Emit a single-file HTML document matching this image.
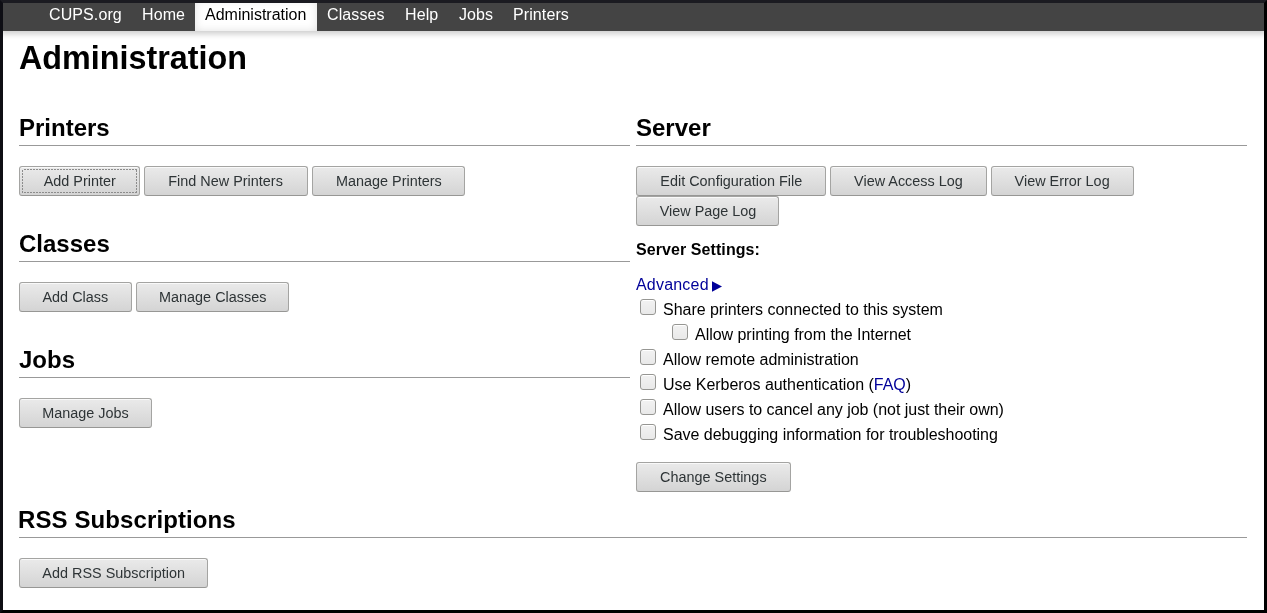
<!DOCTYPE html>
<html><head><meta charset="utf-8">
<style>
*{box-sizing:border-box}
html,body{margin:0;padding:0}
body{width:1267px;height:613px;overflow:hidden;position:relative;background:#fff;color:#000;font-family:"Liberation Sans",sans-serif;font-size:16px}
.fr{position:absolute;z-index:100}
.nav{position:absolute;left:0;top:0;width:1267px;height:31px;background:#444;box-shadow:0 3px 6px rgba(0,0,0,.2);z-index:50}
.nav a{position:absolute;top:0;height:31px;line-height:18px;padding:6px 10px 0;color:#fff;text-decoration:none;white-space:nowrap;letter-spacing:0.1px}
.nav a.active{letter-spacing:0;background:#fff;color:#000;box-shadow:inset 0 0 8px rgba(0,0,0,.12)}
.abs{position:absolute;white-space:nowrap}
h1{position:absolute;margin:0;font-size:32.3px;font-weight:bold;line-height:37px}
h2{position:absolute;margin:0;font-size:24px;font-weight:bold;line-height:28px}
.rule{position:absolute;height:1px;background:#999}
.btn{position:absolute;height:30px;border:1px solid #a4a4a2;border-bottom-color:#979795;border-radius:3px;background:linear-gradient(#eaeaea,#d4d4d4);box-shadow:inset 0 1px 0 rgba(255,255,255,.7);font-size:15.5px;color:#2e3436;text-align:center;line-height:28px;white-space:nowrap}
.btn.focus::after{content:"";position:absolute;left:2px;top:2px;right:2px;bottom:2px;background:repeating-linear-gradient(90deg,#8c8c8c 0 2px,transparent 2px 3px) 2px 0/100% 1px no-repeat,repeating-linear-gradient(90deg,#8c8c8c 0 2px,transparent 2px 3px) 2px 100%/100% 1px no-repeat,repeating-linear-gradient(180deg,#8c8c8c 0 2px,transparent 2px 3px) 0 1px/1px 100% no-repeat,repeating-linear-gradient(180deg,#8c8c8c 0 2px,transparent 2px 3px) 100% 1px/1px 100% no-repeat}
.cb{position:absolute;width:16px;height:16px;border:1px solid #969693;border-radius:3px;background:linear-gradient(#f2f2f2,#e9e9e9);box-shadow:inset 0 1px 0 #fff}
.lbl{position:absolute;white-space:nowrap;font-size:16px;line-height:18px;letter-spacing:-0.03px}
.btn span{display:inline-block;transform:scaleX(0.93);transform-origin:50% 50%}
a.lnk{color:#000099;text-decoration:none}
</style></head><body>
<div id="w" style="position:absolute;left:0;top:0;width:1267px;height:613px;will-change:transform">
<div class="fr" style="left:0;top:0;width:1267px;height:613px;border-style:solid;border-width:3px;border-color:#1b1b21 #000 #000 #0e0e14"></div>

<div class="nav">
<a style="left:39px">CUPS.org</a>
<a style="left:132px">Home</a>
<a class="active" style="left:195px;width:122px">Administration</a>
<a style="left:317px">Classes</a>
<a style="left:395px">Help</a>
<a style="left:449px">Jobs</a>
<a style="left:503px">Printers</a>
</div>

<h1 style="left:19px;top:40px">Administration</h1>

<h2 style="left:19px;top:114px">Printers</h2>
<div class="rule" style="left:19px;top:145px;width:611px"></div>
<div class="btn focus" style="left:19px;top:166px;width:121px"><span>Add Printer</span></div>
<div class="btn" style="left:144px;top:166px;width:164px"><span>Find New Printers</span></div>
<div class="btn" style="left:312px;top:166px;width:153px"><span>Manage Printers</span></div>

<h2 style="left:19px;top:230px">Classes</h2>
<div class="rule" style="left:19px;top:261px;width:611px"></div>
<div class="btn" style="left:19px;top:282px;width:113px"><span>Add Class</span></div>
<div class="btn" style="left:136px;top:282px;width:153px"><span>Manage Classes</span></div>

<h2 style="left:19px;top:346px">Jobs</h2>
<div class="rule" style="left:19px;top:377px;width:611px"></div>
<div class="btn" style="left:19px;top:398px;width:133px"><span>Manage Jobs</span></div>

<h2 style="left:18px;top:506px;letter-spacing:0.1px">RSS Subscriptions</h2>
<div class="rule" style="left:19px;top:537px;width:1228px"></div>
<div class="btn" style="left:19px;top:558px;width:189px"><span>Add RSS Subscription</span></div>

<h2 style="left:636px;top:114px">Server</h2>
<div class="rule" style="left:636px;top:145px;width:611px"></div>
<div class="btn" style="left:636px;top:166px;width:190px"><span>Edit Configuration File</span></div>
<div class="btn" style="left:830px;top:166px;width:157px"><span>View Access Log</span></div>
<div class="btn" style="left:991px;top:166px;width:143px"><span>View Error Log</span></div>
<div class="btn" style="left:636px;top:196px;width:143px"><span>View Page Log</span></div>

<div class="abs" style="left:636px;top:241px;font-weight:bold;line-height:18px;letter-spacing:0.08px">Server Settings:</div>
<div class="abs" style="left:636px;top:276px;line-height:18px;letter-spacing:0.2px"><a class="lnk">Advanced</a></div>
<svg style="position:absolute;left:711px;top:280px" width="13" height="13" viewBox="0 0 13 13"><polygon points="1,1.3 11,6.5 1,11.7" fill="#000099"/></svg>

<div class="cb" style="left:640px;top:299px"></div><div class="lbl" style="left:663px;top:301px">Share printers connected to this system</div>
<div class="cb" style="left:672px;top:324px"></div><div class="lbl" style="left:695px;top:326px">Allow printing from the Internet</div>
<div class="cb" style="left:640px;top:349px"></div><div class="lbl" style="left:663px;top:351px">Allow remote administration</div>
<div class="cb" style="left:640px;top:374px"></div><div class="lbl" style="left:663px;top:376px">Use Kerberos authentication (<a class="lnk">FAQ</a>)</div>
<div class="cb" style="left:640px;top:399px"></div><div class="lbl" style="left:663px;top:401px">Allow users to cancel any job (not just their own)</div>
<div class="cb" style="left:640px;top:424px"></div><div class="lbl" style="left:663px;top:426px">Save debugging information for troubleshooting</div>

<div class="btn" style="left:636px;top:462px;width:155px"><span>Change Settings</span></div>
</div>
</body></html>
